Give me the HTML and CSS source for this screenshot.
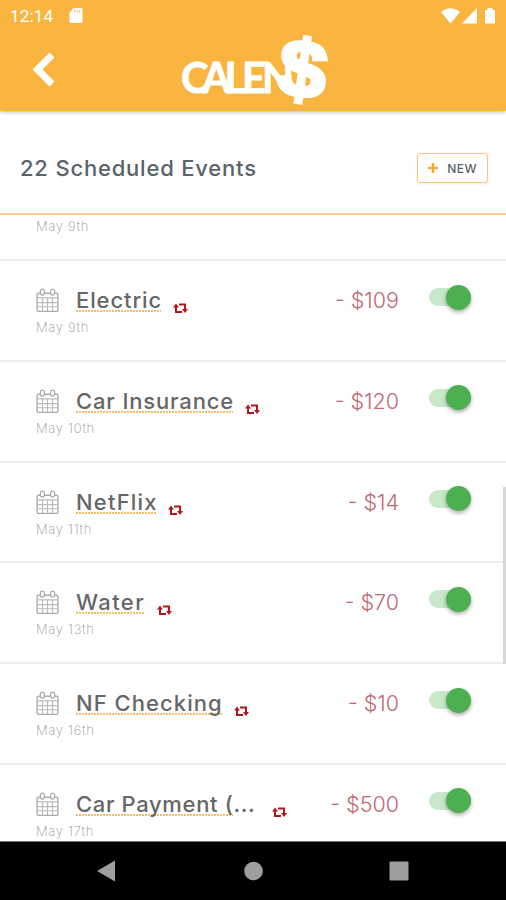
FILE: index.html
```html
<!DOCTYPE html>
<html lang="en">
<head>
<meta charset="utf-8">
<title>Scheduled Events</title>
<link rel="stylesheet" href="styles.css">
</head>
<body>
<svg class="defs" width="0" height="0">
  <symbol id="calendar" viewBox="0 0 22 24">
    <rect x="1" y="5" width="20" height="17.500" rx="1.500" fill="#fff" stroke="#aaa" stroke-width="1.300"/>
    <path d="M1 9.500h20M6.200 10v12M11 10v12M15.800 10v12M1 14h20M1 18h20" fill="none" stroke="#bbb" stroke-width="1.100"/>
    <rect x="4.200" y="1" width="3.800" height="5.800" rx="1.900" fill="#fff" stroke="#aaa" stroke-width="1.200"/>
    <rect x="14" y="1" width="3.800" height="5.800" rx="1.900" fill="#fff" stroke="#aaa" stroke-width="1.200"/>
  </symbol>
  <symbol id="repeat" viewBox="0 0 15 12">
    <path d="M3 4v6h6M6 2.500h6V8" fill="none" stroke="#b3161d" stroke-width="2"/>
    <path d="M0 5.500L3 1.500l3 4zM9 7l3 4 3-4z" fill="#b3161d"/>
  </symbol>
</svg>
<div class="screen">
  <header class="top">
    <div class="status">
      <span class="time">12:14</span>
      <svg class="sd" viewBox="0 0 14 16"><path d="M4.500 0H12q1.500 0 1.500 1.500v12q0 1.500-1.500 1.500H2Q.5 15 .5 13.500V4.500z" fill="#fff"/><path d="M5.500 2v2.500M8 2v2.500M10.500 2v2.500" stroke="#f9c878" stroke-width="1.300"/></svg>
      <svg class="signals" viewBox="0 0 56 17"><path d="M0 4Q9.500-3.500 19 4L9.500 15.500zM21 15.500L36 0v15.500zM44 2h2.500V0h5v2H54v13.500H44z" fill="#fff"/></svg>
    </div>
    <div class="brand">
      <svg class="back" viewBox="0 0 24 36"><path d="M20 3L5.500 17.500 20 32" fill="none" stroke="#fff" stroke-width="7"/></svg>
      <svg class="logo" viewBox="0 0 150 76">
        <text class="word" y="61" x="0 21 43.500 61 81">CALEN</text>
        <text class="dollar" transform="translate(94 61) rotate(8) scale(1.080 1)">$</text>
      </svg>
    </div>
  </header>
  <section class="heading">
    <h1>22 Scheduled Events</h1>
    <button class="new"><svg viewBox="0 0 10 10"><path d="M5 0v10M0 5h10" stroke="#f5ad35" stroke-width="2.600"/></svg><span>NEW</span></button>
  </section>
  <main class="list">
    <article class="row partial"><p class="date">May 9th</p></article>
    <article class="row"><div class="line"><svg class="cal"><use href="#calendar"/></svg><h2 class="electric">Electric</h2><svg class="rep"><use href="#repeat"/></svg><span class="amount">- $109</span><i class="switch"></i></div><p class="date">May 9th</p></article>
    <article class="row"><div class="line"><svg class="cal"><use href="#calendar"/></svg><h2 class="insurance">Car Insurance</h2><svg class="rep"><use href="#repeat"/></svg><span class="amount">- $120</span><i class="switch"></i></div><p class="date">May 10th</p></article>
    <article class="row"><div class="line"><svg class="cal"><use href="#calendar"/></svg><h2 class="netflix">NetFlix</h2><svg class="rep"><use href="#repeat"/></svg><span class="amount">- $14</span><i class="switch"></i></div><p class="date">May 11th</p></article>
    <article class="row"><div class="line"><svg class="cal"><use href="#calendar"/></svg><h2 class="water">Water</h2><svg class="rep"><use href="#repeat"/></svg><span class="amount">- $70</span><i class="switch"></i></div><p class="date">May 13th</p></article>
    <article class="row"><div class="line"><svg class="cal"><use href="#calendar"/></svg><h2 class="checking">NF Checking</h2><svg class="rep"><use href="#repeat"/></svg><span class="amount">- $10</span><i class="switch"></i></div><p class="date">May 16th</p></article>
    <article class="row"><div class="line"><svg class="cal"><use href="#calendar"/></svg><h2 class="payment"><span>Car Payment (</span>...</h2><svg class="rep"><use href="#repeat"/></svg><span class="amount">- $500</span><i class="switch"></i></div><p class="date">May 17th</p></article>
    <i class="scrollbar"></i>
  </main>
  <nav class="nav">
    <svg viewBox="0 0 506 58"><path d="M97 29l18-10.500v21z" fill="#9e9e9e"/><circle cx="253.500" cy="29" r="9.300" fill="#9e9e9e"/><rect x="389.500" y="19.500" width="19" height="19" rx="1" fill="#9e9e9e"/></svg>
  </nav>
</div>
</body>
</html>
```
FILE: styles.css
```css
* { box-sizing: border-box; }
body { margin: 0; background: #fff; font-family: Inter, "Open Sans", sans-serif; }
h1, h2, p { margin: 0; }
svg { display: block; flex: none; }
.defs { position: absolute; }
.screen { width: 506px; height: 900px; display: flex; flex-direction: column; overflow: hidden; }
.top { height: 111px; flex: none; background: #f9b540; box-shadow: 0 1px 4px rgba(0,0,0,.3); }
.status { height: 32px; display: flex; align-items: center; padding: 0 9px 0 10px; color: #fff; }
.time { font: 17px/32px Roboto, sans-serif; width: 59px; letter-spacing: .2px; }
.sd { width: 14px; height: 16px; }
.signals { width: 56px; height: 17px; margin-left: auto; }
.brand { display: flex; height: 76px; padding-left: 30px; }
.back { width: 24px; height: 36px; margin: 20px 0 0 2px; }
.logo { width: 150px; height: 76px; margin-left: 125px; overflow: visible; }
.word { font: 700 41.500px Lato, sans-serif; fill: #fff; stroke: #fff; stroke-width: .8px; }
.dollar { font: 700 80px "Liberation Sans", sans-serif; fill: #fff; stroke: #fff; stroke-width: 4px; }
.heading { height: 104px; flex: none; display: flex; align-items: center; justify-content: space-between; padding: 12px 18px 0 20px; border-bottom: 2px solid #f9cf94; }
h1 { font-size: 22px; font-weight: 500; color: #59636b; letter-spacing: .8px; white-space: nowrap; }
.new { width: 71px; height: 30px; border: 1.500px solid #fbc47a; border-radius: 3px; background: #fff; padding: 0 10px; display: flex; align-items: center; justify-content: space-between; font: 500 12px Inter, sans-serif; letter-spacing: .5px; color: #59636b; box-shadow: 0 1px 3px rgba(0,0,0,.08); }
.new svg { width: 10px; height: 10px; }
.list { height: 627px; flex: none; overflow: hidden; position: relative; border-bottom: 1px solid #777; }
.row { height: 100.800px; border-bottom: 2px solid #eee; padding: 24px 35px 0 36px; }
.row.partial { height: 46px; padding-top: 3px; }
.line { display: flex; height: 34px; align-items: flex-start; }
.cal { width: 23px; height: 25px; margin-top: 3px; }
h2 { font-size: 22px; font-weight: 500; line-height: 30px; color: #666; white-space: nowrap; margin-left: 17px; height: 27px; letter-spacing: .9px; }
h2:not(.payment), h2 span { background: repeating-linear-gradient(90deg, #f9bd68 0 2px, transparent 2px 3px) left bottom / 100% 2px no-repeat; }
h2 span { display: inline-block; height: 27px; vertical-align: top; }
.electric { width: 85px; }
.insurance { width: 157px; letter-spacing: .85px; }
.netflix { width: 80px; letter-spacing: 1.200px; }
.water { width: 69px; letter-spacing: 1.400px; }
.checking { width: 146px; letter-spacing: 1.050px; }
.payment { width: 184px; letter-spacing: .65px; }
.rep { width: 15px; height: 12px; margin: 17px 0 0 12px; }
.amount { margin-left: auto; font-size: 21.500px; font-weight: 300; line-height: 30px; color: #c06874; white-space: nowrap; }
.switch { width: 42px; height: 18px; border-radius: 9px; background: #c8e8ca; margin: 3px 0 0 30px; flex: none; display: flex; align-items: center; justify-content: flex-end; }
.switch::after { content: ""; width: 25px; height: 25px; flex: none; border-radius: 50%; background: #4caf50; box-shadow: 0 2px 4px rgba(0,0,0,.35); }
.date { font-size: 13px; font-weight: 200; line-height: 17px; color: #999; letter-spacing: .7px; }
.scrollbar { position: absolute; right: 0; top: 272px; width: 3px; height: 177px; background: #d8d8d8; }
.nav { height: 58px; flex: none; background: #000; }
.nav svg { width: 506px; height: 58px; }
```
